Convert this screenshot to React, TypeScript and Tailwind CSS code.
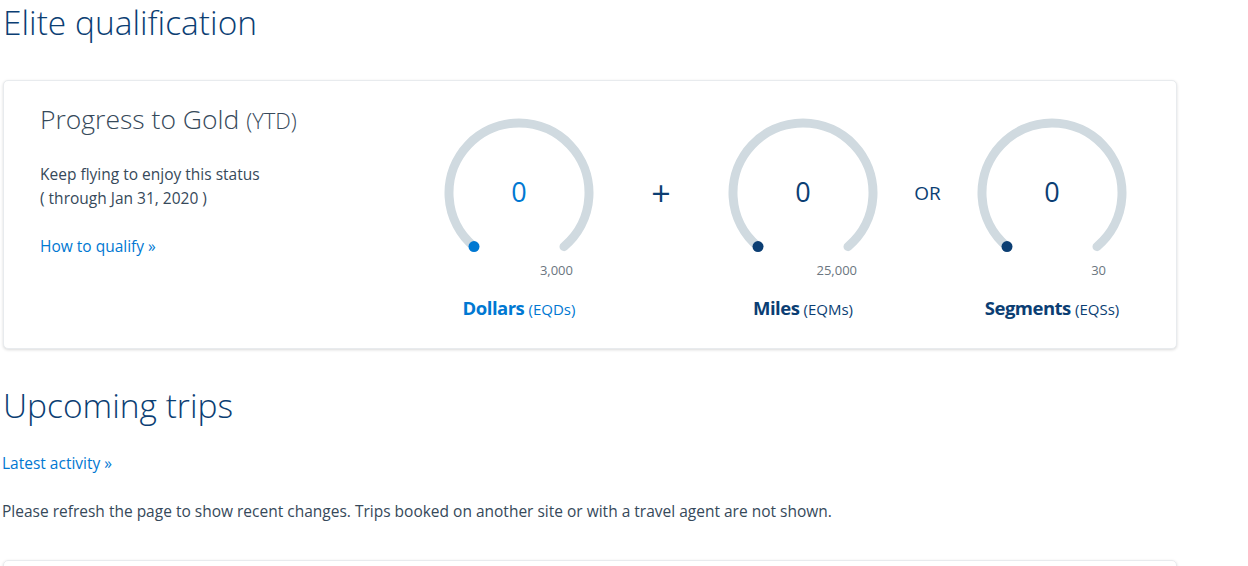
import React from 'react';

const FONT = "font-['Open_Sans','Liberation_Sans',sans-serif]";

type GaugeProps = {
  max: string;
  label: string;
  unit: string;
  accent: string; // tailwind text colour class for the number
  dot: string;
  labelClass: string;
};

function Gauge({ max, label, unit, dot, accent, labelClass }: GaugeProps) {
  // arc from 130deg to 50deg (screen angles), through the top
  const cx = 80;
  const cy = 80;
  const r = 70;
  const a1 = (130 * Math.PI) / 180;
  const a2 = (50 * Math.PI) / 180;
  const x1 = cx + r * Math.cos(a1);
  const y1 = cy + r * Math.sin(a1);
  const x2 = cx + r * Math.cos(a2);
  const y2 = cy + r * Math.sin(a2);

  return (
    <div className="flex w-[160px] flex-col items-center">
      <div className="relative h-[160px] w-[160px]">
        <svg width="160" height="160" viewBox="0 0 160 160">
          <path
            d={`M ${x1} ${y1} A ${r} ${r} 0 1 1 ${x2} ${y2}`}
            fill="none"
            stroke="#d0dae0"
            strokeWidth="9"
            strokeLinecap="round"
          />
          <circle cx={x1} cy={y1} r="5.5" fill={dot} />
        </svg>
        <div className={`absolute inset-x-0 top-[63px] text-center text-[27px] leading-8 ${accent}`}>0</div>
      </div>
      <div className="-mt-[13px] w-full pr-[26px] text-right text-[13px] leading-5 text-[#6b7680]">{max}</div>
      <div className={`mt-[14px] whitespace-nowrap text-center ${labelClass}`}>
        <span className="text-[18.5px] font-bold tracking-[-0.5px]">{label}</span>{' '}
        <span className="text-[15px]">{unit}</span>
      </div>
    </div>
  );
}

export default function App() {
  return (
    <div className={`${FONT} bg-white text-[#36495a] w-[1248px] h-[566px] overflow-hidden`}>
      <h1 className="pl-[3px] text-[33.5px] font-light leading-[44px] text-[#0b3e73]">Elite qualification</h1>

      {/* Card */}
      <div className="ml-[3px] mt-[36px] w-[1174px] h-[269px] rounded-[5px] border border-[#e8ebee] bg-white shadow-[0_1px_3px_rgba(0,0,0,0.15)] flex">
        <div className="w-[400px] pl-[36px] pt-[20px]">
          <h2 className="text-[26.5px] font-light leading-[36px] text-[#36495a]">
            Progress to Gold <span className="text-[22px]">(YTD)</span>
          </h2>
          <p className="mt-[24px] text-[15.5px] leading-6">Keep flying to enjoy this status</p>
          <p className="text-[15.5px] leading-6">( through Jan 31, 2020 )</p>
          <a className="mt-[24px] block text-[15.5px] leading-6 text-[#0078d2]">How to qualify »</a>
        </div>

        <div className="ml-[35px] flex pt-[32px]">
          <Gauge
            max="3,000"
            label="Dollars"
            unit="(EQDs)"
            dot="#0078d2"
            accent="text-[#0078d2]"
            labelClass="text-[#0078d2]"
          />
          <div className="flex h-[160px] w-[124px] items-center justify-center text-[34px] text-[#0b3e73]">+</div>
          <Gauge
            max="25,000"
            label="Miles"
            unit="(EQMs)"
            dot="#0b3e73"
            accent="text-[#0b3e73]"
            labelClass="text-[#0b3e73]"
          />
          <div className="flex h-[160px] w-[89px] items-center justify-center text-[19px] text-[#0b3e73]">OR</div>
          <Gauge
            max="30"
            label="Segments"
            unit="(EQSs)"
            dot="#0b3e73"
            accent="text-[#0b3e73]"
            labelClass="text-[#0b3e73]"
          />
        </div>
      </div>

      <h1 className="mt-[34px] pl-[3px] text-[33.5px] font-light leading-[44px] text-[#0b3e73]">Upcoming trips</h1>
      <a className="mt-[24px] block pl-[2px] text-[15.5px] leading-6 text-[#0078d2]">Latest activity »</a>
      <p className="mt-[24px] pl-[2px] text-[15.5px] leading-6">
        Please refresh the page to show recent changes. Trips booked on another site or with a travel agent are not shown.
      </p>
      <div className="ml-[3px] mt-[37px] h-[40px] w-[1174px] rounded-[5px] border border-[#e8ebee] shadow-[0_1px_3px_rgba(0,0,0,0.15)]"></div>
    </div>
  );
}
